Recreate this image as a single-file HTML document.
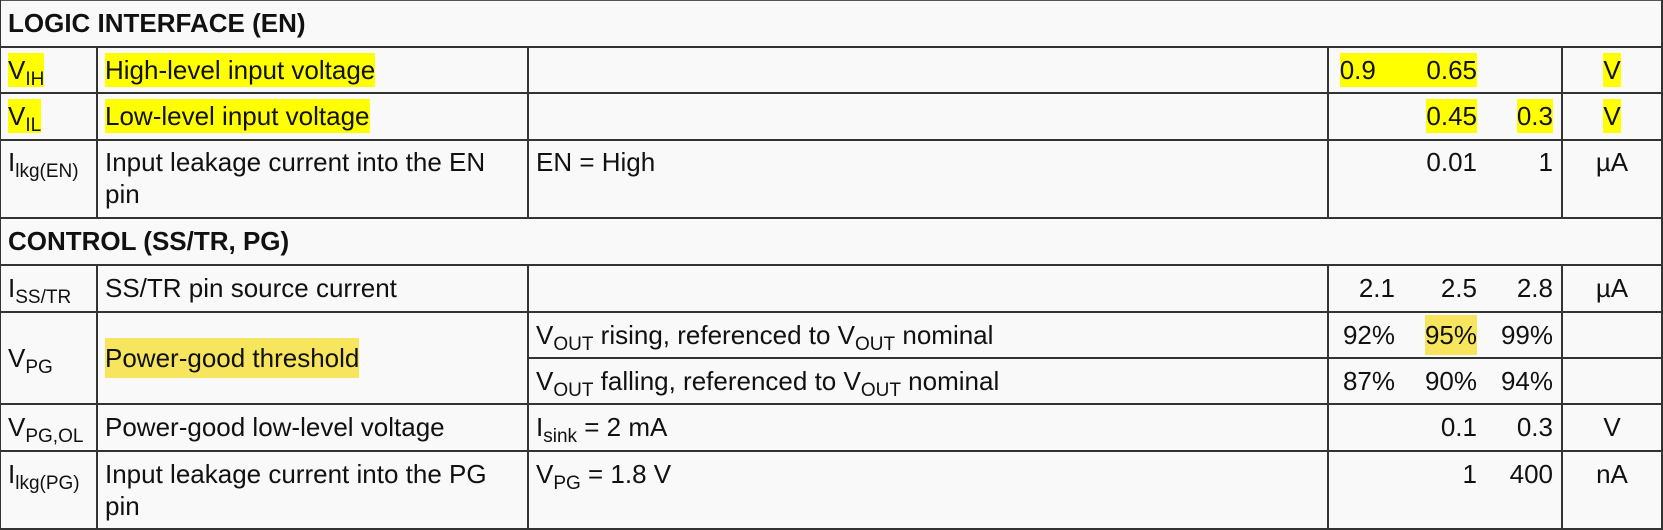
<!DOCTYPE html>
<html><head><meta charset="utf-8"><style>
html,body{margin:0;padding:0;}
body{width:1663px;height:530px;background:#f9f9f9;position:relative;overflow:hidden;font-family:"Liberation Sans",Arial,sans-serif;font-size:26px;color:#111;}
.h{position:absolute;height:2px;background:#333;}
.v{position:absolute;width:2px;background:#333;}
.t{position:absolute;line-height:30px;white-space:nowrap;}
.m{line-height:32px;}
.r{text-align:right;}
.c{text-align:center;}
.b{font-weight:bold;font-size:26px;}
sub{font-size:19px;vertical-align:-6px;line-height:0;}
.y{background:#ffff00;padding:2px 0;}
.g{background:#f7e55e;padding:5px 0;}
</style></head><body>
<div class="h" style="left:0;top:0;width:1663px;height:1px;background:#555"></div>
<div class="h" style="left:0;top:46px;width:1663px"></div>
<div class="h" style="left:0;top:92px;width:1663px"></div>
<div class="h" style="left:0;top:139px;width:1663px"></div>
<div class="h" style="left:0;top:217px;width:1663px"></div>
<div class="h" style="left:0;top:264px;width:1663px"></div>
<div class="h" style="left:0;top:311px;width:1663px"></div>
<div class="h" style="left:528px;top:357px;width:1135px"></div>
<div class="h" style="left:0;top:403px;width:1663px"></div>
<div class="h" style="left:0;top:450px;width:1663px"></div>
<div class="h" style="left:0;top:528px;width:1663px"></div>
<div class="v" style="left:0;top:0;height:530px;width:1px"></div>
<div class="v" style="left:1661px;top:0;height:530px"></div>
<div class="v" style="left:96px;top:46px;height:172px"></div>
<div class="v" style="left:96px;top:264px;height:266px"></div>
<div class="v" style="left:527px;top:46px;height:172px"></div>
<div class="v" style="left:527px;top:264px;height:266px"></div>
<div class="v" style="left:1327px;top:46px;height:172px"></div>
<div class="v" style="left:1327px;top:264px;height:266px"></div>
<div class="v" style="left:1561px;top:46px;height:172px"></div>
<div class="v" style="left:1561px;top:264px;height:266px"></div>

<div class="t b" style="left:8px;top:8px">LOGIC INTERFACE (EN)</div>
<div class="t" style="left:8px;top:55px"><span class="y">V<sub>IH</sub></span></div>
<div class="t" style="left:105px;top:55px"><span class="y">High-level input voltage</span></div>
<div class="t r" style="right:186px;top:55px"><span class="y">0.9&nbsp;&nbsp;&nbsp;&nbsp;&nbsp;&nbsp;&nbsp;0.65</span></div>
<div class="t c" style="left:1562px;width:100px;top:55px"><span class="y">V</span></div>

<div class="t" style="left:8px;top:101px"><span class="y">V<sub>IL</sub></span></div>
<div class="t" style="left:105px;top:101px"><span class="y">Low-level input voltage</span></div>
<div class="t r" style="right:186px;top:101px"><span class="y">0.45</span></div>
<div class="t r" style="right:110px;top:101px"><span class="y">0.3</span></div>
<div class="t c" style="left:1562px;width:100px;top:101px"><span class="y">V</span></div>

<div class="t" style="left:8px;top:147px">I<sub>lkg(EN)</sub></div>
<div class="t m" style="left:105px;top:146px">Input leakage current into the EN<br>pin</div>
<div class="t" style="left:536px;top:147px">EN = High</div>
<div class="t r" style="right:186px;top:147px">0.01</div>
<div class="t r" style="right:110px;top:147px">1</div>
<div class="t c" style="left:1562px;width:100px;top:147px">µA</div>

<div class="t b" style="left:8px;top:226px">CONTROL (SS/TR, PG)</div>

<div class="t" style="left:8px;top:273px">I<sub>SS/TR</sub></div>
<div class="t" style="left:105px;top:273px">SS/TR pin source current</div>
<div class="t r" style="right:268px;top:273px">2.1</div>
<div class="t r" style="right:186px;top:273px">2.5</div>
<div class="t r" style="right:110px;top:273px">2.8</div>
<div class="t c" style="left:1562px;width:100px;top:273px">µA</div>

<div class="t" style="left:8px;top:343px">V<sub>PG</sub></div>
<div class="t" style="left:105px;top:343px"><span class="g">Power-good threshold</span></div>
<div class="t" style="left:536px;top:320px">V<sub>OUT</sub> rising, referenced to V<sub>OUT</sub> nominal</div>
<div class="t r" style="right:268px;top:320px">92%</div>
<div class="t r" style="right:186px;top:320px"><span class="g">95%</span></div>
<div class="t r" style="right:110px;top:320px">99%</div>
<div class="t" style="left:536px;top:366px">V<sub>OUT</sub> falling, referenced to V<sub>OUT</sub> nominal</div>
<div class="t r" style="right:268px;top:366px">87%</div>
<div class="t r" style="right:186px;top:366px">90%</div>
<div class="t r" style="right:110px;top:366px">94%</div>

<div class="t" style="left:8px;top:412px">V<sub>PG,OL</sub></div>
<div class="t" style="left:105px;top:412px">Power-good low-level voltage</div>
<div class="t" style="left:536px;top:412px">I<sub>sink</sub> = 2 mA</div>
<div class="t r" style="right:186px;top:412px">0.1</div>
<div class="t r" style="right:110px;top:412px">0.3</div>
<div class="t c" style="left:1562px;width:100px;top:412px">V</div>

<div class="t" style="left:8px;top:459px">I<sub>lkg(PG)</sub></div>
<div class="t m" style="left:105px;top:458px">Input leakage current into the PG<br>pin</div>
<div class="t" style="left:536px;top:459px">V<sub>PG</sub> = 1.8 V</div>
<div class="t r" style="right:186px;top:459px">1</div>
<div class="t r" style="right:110px;top:459px">400</div>
<div class="t c" style="left:1562px;width:100px;top:459px">nA</div>
</body></html>
